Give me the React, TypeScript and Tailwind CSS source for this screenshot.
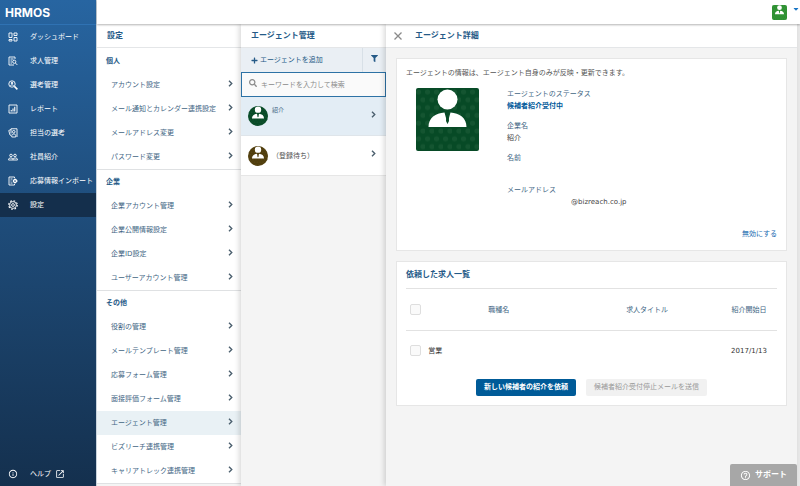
import React from 'react';
import { FaCaretDown, FaFilter, FaPlus, FaSearch } from 'react-icons/fa';
import { MdHelpOutline, MdInfoOutline, MdOpenInNew } from 'react-icons/md';

const NavIcon = ({ children }: { children: React.ReactNode }) => (
  <svg viewBox="0 0 20 20" className="size-[10px]" fill="none" stroke="currentColor" strokeWidth="1.8">
    {children}
  </svg>
);

const DashboardIcon = () => (
  <NavIcon>
    <path d="M2 2h6v9H2zM12 2h6v5h-6zM12 11h6v7h-6zM2 15h6v3H2z" />
  </NavIcon>
);

const JobsIcon = () => (
  <NavIcon>
    <path d="M14 6V2H2v16h10M5 6h6M5 10h3M5 14h3" />
    <circle cx="12.5" cy="11.5" r="3.2" />
    <path d="M14.8 14l4 4" />
  </NavIcon>
);

const SelectionIcon = () => (
  <NavIcon>
    <circle cx="8" cy="8" r="6.4" />
    <circle cx="8" cy="6" r="1.6" fill="currentColor" />
    <path d="M4.500 11.500c1-2.400 6-2.400 7 0" />
    <path d="M12.800 12.800l6 6" strokeWidth="3" />
  </NavIcon>
);

const ReportIcon = () => (
  <NavIcon>
    <path d="M2 2h16v16H2z" />
    <path d="M6.500 15v-3M10 15V9M13.500 15V5.500" strokeWidth="2.200" />
  </NavIcon>
);

const AssignedIcon = () => (
  <NavIcon>
    <path d="M6 11V1.500h12V18M6 3L1.500 5 4 14l2 1" />
    <circle cx="11.500" cy="7.500" r="2.600" />
    <path d="M7.500 18v-3c0-4 8-4 8 0v3z" />
  </NavIcon>
);

const PeopleIcon = () => (
  <NavIcon>
    <circle cx="6" cy="7" r="2.600" />
    <circle cx="14" cy="7" r="2.600" />
    <path d="M1 16v-1.500c0-3.500 9-3.500 9 0V16zM10 14.500c0-3.500 9-3.500 9 0V16h-9" />
  </NavIcon>
);

const ImportIcon = () => (
  <NavIcon>
    <path d="M13 4V2H2v16h11v-2M5 6h4M5 10h2M5 14h4" />
    <circle cx="14" cy="10" r="3" strokeWidth="2.600" />
    <path d="M14 5v2M14 13v2M9.500 10H11M17 10h2.500" />
  </NavIcon>
);

const GearIcon = () => (
  <NavIcon>
    <circle cx="10" cy="10" r="6.800" />
    <circle cx="10" cy="10" r="2.800" />
    <circle cx="10" cy="10" r="8.600" strokeWidth="2.200" strokeDasharray="3.400 3.354" />
  </NavIcon>
);

const Chevron = () => (
  <svg viewBox="0 0 10 14" className="h-[7px] w-[5px] shrink-0 text-[#4b5f6e]" fill="none" stroke="currentColor" strokeWidth="2.800">
    <path d="M2 1.500L7.500 7 2 12.500" />
  </svg>
);

// person on a dotted background
const Avatar = ({ id, color, dot, className }: { id: string; color: string; dot: string; className: string }) => (
  <svg viewBox="0 0 63 63" className={className}>
    <defs>
      <pattern id={id} width="9" height="15.600" patternUnits="userSpaceOnUse">
        <circle cx="2.500" cy="4" r="2.600" fill={dot} />
        <circle cx="7" cy="11.800" r="2.600" fill={dot} />
      </pattern>
    </defs>
    <rect width="63" height="63" fill={color} />
    <rect width="63" height="63" fill={`url(#${id})`} opacity="0.600" />
    <circle cx="31.500" cy="11.500" r="10" fill="#fff" />
    <path d="M12.500 39c0-9 7-14 16-14.500l3 11 3-11c9 .5 16 5.500 16 14.500z" fill="#fff" />
    <path d="M29.500 25h4l-1 3 .5 5-1.500 3-1.500-3 .5-5z" fill={color} />
  </svg>
);

const navItems = [
  { label: 'ダッシュボード', icon: <DashboardIcon /> },
  { label: '求人管理', icon: <JobsIcon /> },
  { label: '選考管理', icon: <SelectionIcon /> },
  { label: 'レポート', icon: <ReportIcon /> },
  { label: '担当の選考', icon: <AssignedIcon /> },
  { label: '社員紹介', icon: <PeopleIcon /> },
  { label: '応募情報インポート', icon: <ImportIcon /> },
  { label: '設定', icon: <GearIcon />, active: true }
];

const sections = [
  { title: '個人', items: ['アカウント設定', 'メール通知とカレンダー連携設定', 'メールアドレス変更', 'パスワード変更'] },
  { title: '企業', items: ['企業アカウント管理', '企業公開情報設定', '企業ID設定', 'ユーザーアカウント管理'] },
  {
    title: 'その他',
    items: [
      '役割の管理',
      'メールテンプレート管理',
      '応募フォーム管理',
      '面接評価フォーム管理',
      'エージェント管理',
      'ビズリーチ連携管理',
      'キャリアトレック連携管理'
    ]
  }
];

const Sidebar = () => (
  <nav className="flex w-[97px] shrink-0 flex-col border-r border-[#c9d3dc] bg-linear-to-b from-[#2765a1] to-[#14304e] text-white">
    <a href="#" className="flex h-[25px] shrink-0 items-center border-b border-[#2f72b3] pt-[2px] pl-[5px] font-[Inter,sans-serif] text-[12px] font-bold">
      HRMOS
    </a>
    {navItems.map(({ label, icon, active }) => (
      <a
        key={label}
        href="#"
        className={`flex h-6 shrink-0 items-center whitespace-nowrap pl-2 ${active ? 'bg-[#142f4c]' : ''}`}
      >
        <span className="flex w-[22px] items-center">{icon}</span>
        {label}
      </a>
    ))}
    <a href="#" className="mt-auto flex h-6 shrink-0 items-center pl-2">
      <span className="w-[22px]"><MdInfoOutline size={10} /></span>
      ヘルプ
      <MdOpenInNew size={10} className="ml-1" />
    </a>
  </nav>
);

const ColumnTitle = ({ children }: { children: React.ReactNode }) => (
  <h2 className="flex h-6 shrink-0 items-center border-b border-[#e4e6e8] bg-white px-[10px] text-[8px] font-bold text-[#255a87]">
    {children}
  </h2>
);

const Settings = () => (
  <section className="flex w-36 shrink-0 flex-col overflow-hidden bg-[#f4f4f4]">
    <ColumnTitle>設定</ColumnTitle>
    <div className="shrink-0 bg-white pt-px">
      {sections.map(({ title, items }) => (
        <div key={title} className="border-b border-[#dfe1e3]">
          <h3 className="flex h-6 items-center px-[9px] font-bold text-[#255a87]">{title}</h3>
          {items.map(item => (
            <a
              key={item}
              href="#"
              className={`flex h-6 items-center justify-between whitespace-nowrap pr-2 pl-[14px] ${
                item === 'エージェント管理' ? 'bg-[#e9f1f5]' : ''
              }`}
            >
              {item}
              <span className="pb-1"><Chevron /></span>
            </a>
          ))}
        </div>
      ))}
    </div>
  </section>
);

const Agents = () => (
  <section className="flex w-[145px] shrink-0 flex-col bg-[#f4f4f4] shadow-[-2px_0_5px_rgba(0,0,0,0.15)]">
    <ColumnTitle>エージェント管理</ColumnTitle>
    <div className="flex h-6 bg-[#eaeff4] text-[#255a87]">
      <button type="button" className="flex flex-1 items-center gap-[2px] pl-[10px]">
        <FaPlus size={7} />
        エージェントを追加
      </button>
      <button type="button" aria-label="絞り込み" className="flex w-6 items-center justify-center border-l border-[#d8e0e7] pb-1">
        <FaFilter size={7} />
      </button>
    </div>
    <label className="flex h-[25px] items-center border border-[#2d72a5] bg-[#fafafa] pl-[7px]">
      <span className="pb-1 text-[#8a8a8a]"><FaSearch size={8} /></span>
      <input
        type="text"
        aria-label="キーワード"
        placeholder="キーワードを入力して検索"
        className="min-w-0 flex-1 bg-transparent pl-1 text-[7px] outline-none placeholder:text-[#8a8a8a]"
      />
    </label>
    <a href="#" className="flex h-[39px] items-center gap-1 border-b border-[#dfe5ea] bg-[#e3edf5] pr-[10px] pl-[7px]">
      <Avatar id="agent-green" color="#074a26" dot="#1d5c38" className="size-5 rounded-full" />
      <span className="flex-1 pb-3 text-[6px]">紹介</span>
      <span className="pb-1"><Chevron /></span>
    </a>
    <a href="#" className="flex h-10 items-center gap-1 border-b border-[#e6e6e6] bg-white pr-[10px] pl-[7px]">
      <Avatar id="agent-brown" color="#4f3d0c" dot="#655020" className="size-5 rounded-full" />
      <span className="flex-1 text-[#555]">（登録待ち）</span>
      <span className="pb-1"><Chevron /></span>
    </a>
  </section>
);

const Field = ({ label, children }: { label: string; children?: React.ReactNode }) => (
  <div>
    <dt>{label}</dt>
    <dd className="min-h-3 text-[#444]">{children}</dd>
  </div>
);

const Check = ({ label }: { label: string }) => (
  <input
    type="checkbox"
    aria-label={label}
    className="block size-[11px] appearance-none rounded-xs border border-[#dedede] bg-[#fafafa]"
  />
);

const AgentDetail = () => (
  <main className="flex min-w-0 flex-1 flex-col bg-[#f4f4f4] shadow-[-2px_0_5px_rgba(0,0,0,0.15)]">
    <header className="flex h-6 shrink-0 items-center border-b border-[#e4e6e8] bg-white pl-2">
      <button type="button" aria-label="閉じる">
        <svg viewBox="0 0 8 8" className="size-2" stroke="#8a8a8a" strokeWidth="1.300">
          <path d="M0.500 0.500l7 7M7.500 0.500l-7 7" />
        </svg>
      </button>
      <h2 className="pl-[13px] text-[8px] font-bold text-[#255a87]">エージェント詳細</h2>
    </header>

    <div className="flex flex-col gap-[10px] p-[10px]">
      <section className="border border-[#e6e6e6] bg-white px-[9px] pt-2 pb-[10px]">
        <p className="text-[#555]">エージェントの情報は、エージェント自身のみが反映・更新できます。</p>
        <div className="mt-[9px] flex gap-7 pl-[10px]">
          <Avatar id="detail-green" color="#074a26" dot="#1d5c38" className="size-[63px] shrink-0 rounded-xs" />
          <dl className="flex flex-col gap-2">
            <Field label="エージェントのステータス">
              <span className="font-bold text-[#00599a]">候補者紹介受付中</span>
            </Field>
            <Field label="企業名">紹介</Field>
            <Field label="名前" />
            <Field label="メールアドレス">
              <span className="pl-16">@bizreach.co.jp</span>
            </Field>
          </dl>
        </div>
        <div className="mt-5 text-right">
          <a href="#" className="text-[#1a6bb0]">無効にする</a>
        </div>
      </section>

      <section className="border border-[#e6e6e6] bg-white px-[9px] pb-[9px]">
        <h3 className="flex h-[26px] items-center text-[8px] font-bold text-[#255a87]">依頼した求人一覧</h3>
        <table className="w-full table-fixed border-t border-[#e2e2e2]">
          <thead>
            <tr className="h-[42px] border-b border-[#e2e2e2]">
              <th className="w-[6%] pl-1"><Check label="すべて選択" /></th>
              <th className="w-[38%] font-normal">職種名</th>
              <th className="w-[42%] font-normal">求人タイトル</th>
              <th className="w-[14%] pr-1 font-normal">紹介開始日</th>
            </tr>
          </thead>
          <tbody className="text-[#333]">
            <tr className="h-10">
              <td className="pl-1"><Check label="営業" /></td>
              <td>営業</td>
              <td />
              <td className="pr-1 text-center">2017/1/13</td>
            </tr>
          </tbody>
        </table>
        <div className="mt-2 flex justify-center gap-[10px]">
          <button type="button" className="h-[17px] rounded-xs bg-[#005b98] px-2 font-bold text-white">
            新しい候補者の紹介を依頼
          </button>
          <button type="button" disabled className="h-[17px] rounded-xs bg-[#f1f1f1] px-2 text-[#999]">
            候補者紹介受付停止メールを送信
          </button>
        </div>
      </section>
    </div>
  </main>
);

export default function App() {
  return (
    <div
      lang="ja"
      className="flex h-screen overflow-hidden font-['DejaVu_Sans','Noto_Sans_CJK_JP',sans-serif] text-[7px] leading-3 text-[#426684]"
    >
      <Sidebar />
      <div className="flex min-w-0 flex-1 flex-col">
        <header className="relative z-10 flex h-6 shrink-0 justify-end bg-white pt-[5px] shadow-[0_1px_2px_rgba(0,0,0,0.3)]">
          <button type="button" aria-label="アカウント" className="flex gap-[5px]">
            <Avatar id="user" color="#2c8f30" dot="#43a047" className="size-[15px] rounded-xs" />
            <FaCaretDown size={8} className="text-[#1976c5]" />
          </button>
        </header>
        <div className="flex min-h-0 flex-1 bg-[#e8e8e8] pr-[3px]">
          <Settings />
          <Agents />
          <AgentDetail />
        </div>
      </div>
      <button
        type="button"
        className="fixed right-[3px] bottom-0 z-20 flex h-[22px] items-center gap-1 rounded-t-xs bg-[#a7a7a7] px-[10px] text-[8px] font-bold text-white"
      >
        <MdHelpOutline size={11} />
        サポート
      </button>
    </div>
  );
}
